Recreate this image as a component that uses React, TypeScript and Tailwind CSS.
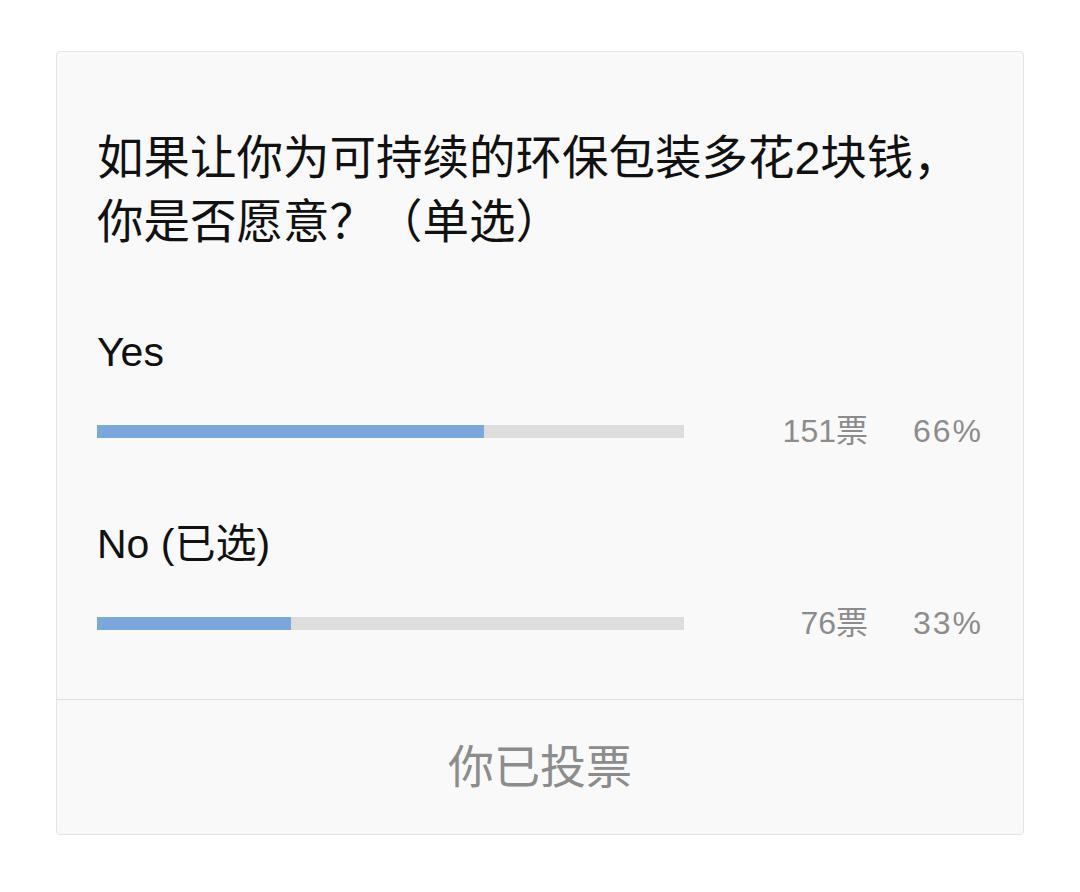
const font = { fontFamily: '"Liberation Sans", "Noto Sans CJK SC", sans-serif' };

type Option = {
  label: string;
  votes: number;
  percent: number;
};

const options: Option[] = [
  { label: "Yes", votes: 151, percent: 66 },
  { label: "No (已选)", votes: 76, percent: 33 },
];

export default function App() {
  return (
    <div className="min-h-screen bg-white pt-[51px] pl-[56px]" style={font}>
      <div className="w-[968px] rounded-[4px] border border-[#e4e4e4] bg-[#f9f9f9]">
        <div className="pt-[74px] pl-[40px] pr-[43px] pb-[61px]">
          {/* Question */}
          <h2 className="text-[46.5px] leading-[64px] text-[#111] font-normal">
            如果让你为可持续的环保包装多花2块钱，
            <br />
            你是否愿意？（单选）
          </h2>

          {options.map((opt, i) => (
            <div key={opt.label} className={i === 0 ? "mt-[74px]" : "mt-[73px]"}>
              <div className="text-[41px] leading-[48px] text-[#111]">{opt.label}</div>
              <div className="mt-[40px] flex h-[31px] items-center">
                <div className="h-[13px] w-[587px] bg-[#dddddd]">
                  <div className="h-full bg-[#7aa8dc]" style={{ width: `${opt.percent}%` }} />
                </div>
                <div className="flex-1 text-right text-[32px] leading-[31px] text-[#8c8c8c]">
                  {opt.votes}票
                </div>
                <div className="-mr-[3px] w-[115px] text-right text-[32px] leading-[31px] tracking-[2px] text-[#8c8c8c]">
                  {opt.percent}%
                </div>
              </div>
            </div>
          ))}
        </div>

        {/* Footer */}
        <div className="-mt-px flex h-[135px] items-center justify-center border-t border-[#dedede]">
          <span className="text-[46px] text-[#8c8c8c]">你已投票</span>
        </div>
      </div>
    </div>
  );
}
